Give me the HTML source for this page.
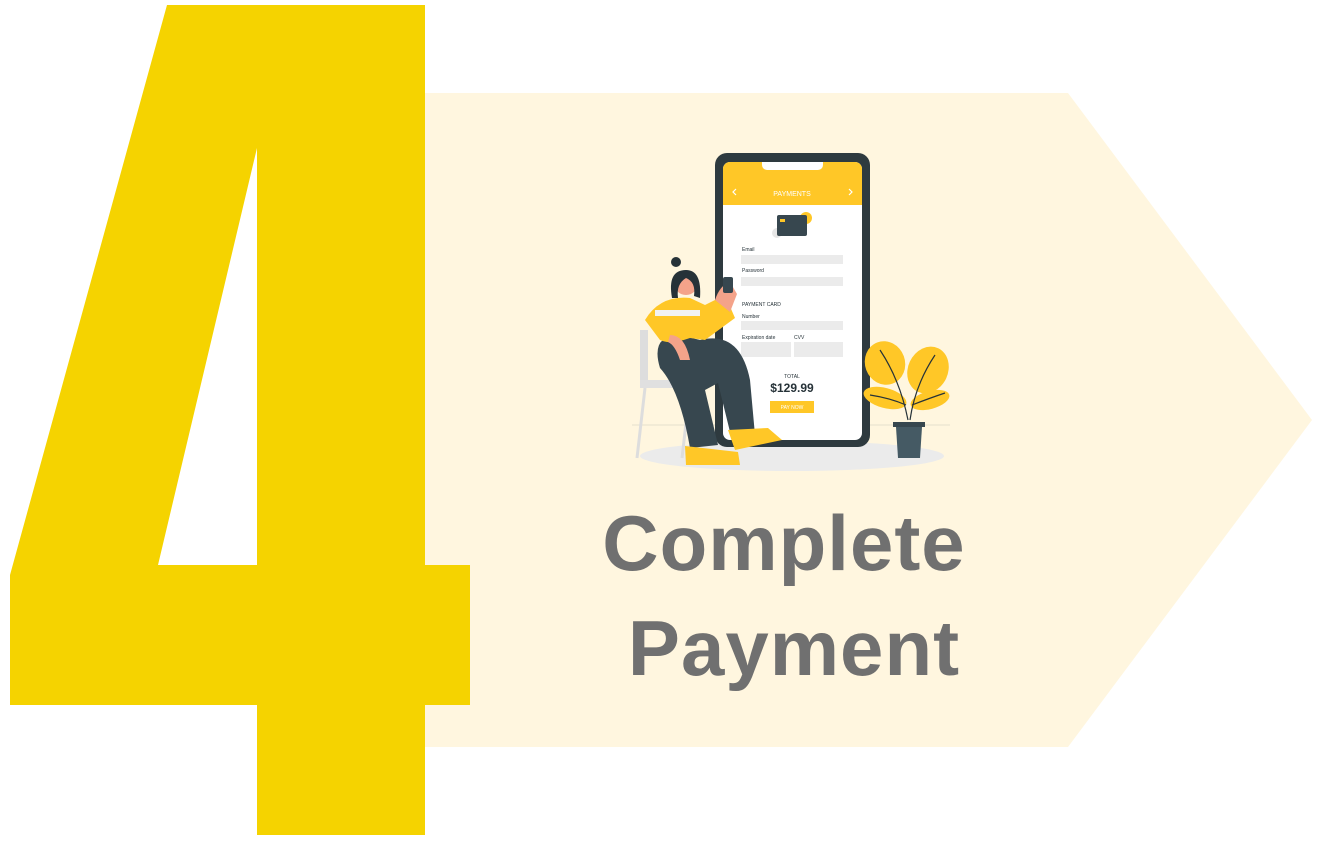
<!DOCTYPE html>
<html><head><meta charset="utf-8"><style>
html,body{margin:0;padding:0;background:#fff;width:1320px;height:841px;overflow:hidden}
svg{position:absolute;left:0;top:0}
</style></head><body>
<svg width="1320" height="841" viewBox="0 0 1320 841" xmlns="http://www.w3.org/2000/svg">
<polygon points="420,93 1068,93 1312,420 1068,747 420,747" fill="#FFF6DF"/>
<path fill="#F5D300" fill-rule="evenodd" d="M167,5 L425,5 L425,565 L470,565 L470,705 L425,705 L425,835 L257,835 L257,705 L10,705 L10,575 Z M257,148 L257,565 L158,565 Z"/>
<line x1="632" y1="425" x2="950" y2="425" stroke="#e6e0cc" stroke-width="1"/>
<ellipse cx="792" cy="456" rx="152" ry="15" fill="#EBEBEB"/>
<rect x="715" y="153" width="155" height="294" rx="12" fill="#2E3A3F"/>
<rect x="723" y="162" width="139" height="278" rx="7" fill="#fff"/>
<path d="M723,169 a7,7 0 0 1 7,-7 H762 v3 a5,5 0 0 0 5,5 H818 a5,5 0 0 0 5,-5 v-3 H855 a7,7 0 0 1 7,7 V205 H723 Z" fill="#FFC727"/>
<rect x="784" y="163" width="17" height="2" rx="1" fill="#fff"/>
<text x="792" y="196" font-family="Liberation Sans,sans-serif" font-size="7" fill="#fff" text-anchor="middle">PAYMENTS</text>
<path d="M736,189 l-3,3 3,3 M849,189 l3,3 -3,3" stroke="#fff" fill="none" stroke-width="1.2"/>
<circle cx="806" cy="218" r="6" fill="#FFC727"/>
<circle cx="777" cy="233" r="5" fill="#e6e6e6"/>
<rect x="777" y="215" width="30" height="21" rx="2" fill="#37474F"/>
<rect x="780" y="219" width="5" height="3" fill="#FFC727"/>
<g font-family="Liberation Sans,sans-serif" font-size="5" fill="#263238">
<text x="742" y="251">Email</text>
<text x="742" y="272">Password</text>
<text x="742" y="306">PAYMENT CARD</text>
<text x="742" y="318">Number</text>
<text x="742" y="339">Expiration date</text>
<text x="794" y="339">CVV</text>
<text x="792" y="378" text-anchor="middle">TOTAL</text>
</g>
<rect x="741" y="255" width="102" height="9" fill="#EBEBEB"/>
<rect x="741" y="277" width="102" height="9" fill="#EBEBEB"/>
<rect x="741" y="321" width="102" height="9" fill="#EBEBEB"/>
<rect x="741" y="342" width="50" height="15" fill="#EBEBEB"/>
<rect x="794" y="342" width="49" height="15" fill="#EBEBEB"/>
<text x="792" y="392" font-family="Liberation Sans,sans-serif" font-size="12" font-weight="bold" fill="#263238" text-anchor="middle">$129.99</text>
<rect x="770" y="401" width="44" height="12" fill="#FFC727"/>
<text x="792" y="409" font-family="Liberation Sans,sans-serif" font-size="5" fill="#fff" text-anchor="middle">PAY NOW</text>
<rect x="640" y="330" width="8" height="58" fill="#ddd"/>
<rect x="640" y="380" width="65" height="8" fill="#e0e0e0"/>
<path d="M645,388 L637,458 M690,388 L682,458" stroke="#ddd" stroke-width="3"/>
<path d="M660,368 Q650,335 680,335 L700,340 Q740,330 750,380 L755,435 L732,440 L718,383 L705,390 L718,445 L690,448 Q680,390 660,368 Z" fill="#37474F"/>
<path d="M645,320 Q660,295 690,298 L705,305 L725,295 L735,318 L705,340 L690,338 Q670,345 660,340 Z" fill="#FFC727"/>
<rect x="655" y="310" width="45" height="6" fill="#f2f2f2"/>
<path d="M670,335 q15,0 20,25 l-10,0 q-5,-15 -12,-18 Z" fill="#F4A38A"/>
<path d="M715,300 q5,-15 15,-18 l7,12 l-7,18 Z" fill="#F4A38A"/>
<rect x="723" y="277" width="10" height="16" rx="2" fill="#37474F"/>
<circle cx="686" cy="283" r="12" fill="#F4A38A"/>
<path d="M672,298 q-5,-28 14,-28 q16,0 14,28 l-6,-2 q2,-14 -8,-18 q-10,6 -8,20 Z" fill="#263238"/>
<circle cx="676" cy="262" r="5" fill="#263238"/>
<path d="M685,446 L738,452 L740,465 L686,465 Z" fill="#FFC727"/>
<path d="M728,430 L768,428 L782,440 L735,450 Z" fill="#FFC727"/>
<ellipse cx="885" cy="363" rx="20" ry="22" fill="#FFC727" transform="rotate(-20 885 363)"/>
<ellipse cx="928" cy="370" rx="20" ry="24" fill="#FFC727" transform="rotate(25 928 370)"/>
<ellipse cx="885" cy="398" rx="22" ry="10" fill="#FFC727" transform="rotate(15 885 398)"/>
<ellipse cx="930" cy="400" rx="20" ry="9" fill="#FFC727" transform="rotate(-15 930 400)"/>
<path d="M908,420 Q900,380 880,350 M910,420 Q915,385 935,355 M906,405 Q890,398 870,395 M912,405 Q930,398 945,393" stroke="#263238" stroke-width="1.2" fill="none"/>
<rect x="893" y="422" width="32" height="5" fill="#37474F"/>
<path d="M896,427 L922,427 L920,458 L898,458 Z" fill="#455A64"/>
<g font-family="Liberation Sans,sans-serif" font-weight="bold" fill="#707070" text-anchor="middle" font-size="78" letter-spacing="1">
<text x="784" y="570">Complete</text>
<text x="794" y="675">Payment</text>
</g>
</svg>
</body></html>
